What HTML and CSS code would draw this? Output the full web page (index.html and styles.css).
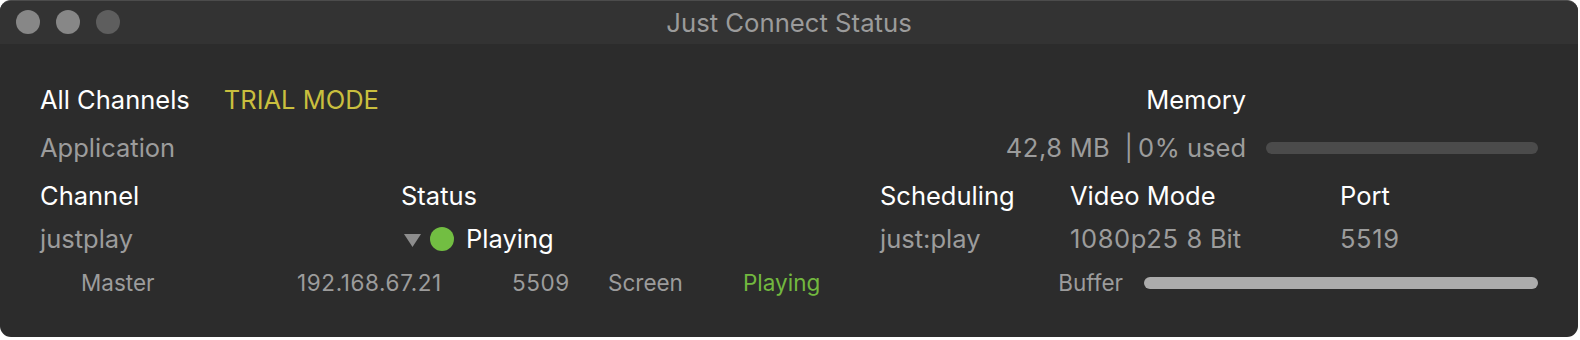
FILE: index.html
```html
<!DOCTYPE html>
<html>
<head>
<meta charset="utf-8">
<link rel="stylesheet" href="styles.css">
</head>
<body>
<div class="window">
  <div class="titlebar">
    <div class="lights">
      <span class="light"></span>
      <span class="light"></span>
      <span class="light dim"></span>
    </div>
    <div class="title">Just Connect Status</div>
  </div>
  <div class="content">
    <div class="summary">
      <div class="row1-left"><span class="white">All Channels</span><span class="trial">TRIAL MODE</span></div>
      <div class="right white">Memory</div>
      <div></div>
      <div class="grey">Application</div>
      <div class="right grey"><span class="num">42,8</span> MB<span class="pipe">|</span><span class="num">0</span>% used</div>
      <div class="barcell"><div class="bar mem"></div></div>
    </div>
    <div class="channels">
      <div class="white">Channel</div>
      <div class="white">Status</div>
      <div class="white">Scheduling</div>
      <div class="white">Video Mode</div>
      <div class="white">Port</div>
      <div class="grey">justplay</div>
      <div class="status">
        <svg class="tri" width="17" height="14" viewBox="0 0 17 14"><polygon points="0,1 17,1 8.5,14" fill="#8d8d8d"/></svg>
        <span class="dot"></span>
        <span class="white">Playing</span>
      </div>
      <div class="grey">just:play</div>
      <div class="grey"><span class="num">1080</span>p<span class="num">25 8</span> Bit</div>
      <div class="grey num">5519</div>
    </div>
    <div class="sub">
      <div>Master</div>
      <div class="num">192.168.67.21</div>
      <div class="num">5509</div>
      <div>Screen</div>
      <div class="green">Playing</div>
      <div class="buflabel">Buffer</div>
      <div class="barcell"><div class="bar buf"></div></div>
    </div>
  </div>
</div>
</body>
</html>
```

FILE: styles.css
```css
html, body {
  margin: 0;
  padding: 0;
  background: #ffffff;
}
body {
  font-family: Inter, "Liberation Sans", sans-serif;
  -webkit-font-smoothing: antialiased;
}
.window {
  width: 1578px;
  height: 337px;
  background: #2c2c2c;
  border-radius: 11px;
  overflow: hidden;
  box-sizing: border-box;
  border-top: 1px solid #4c4c4c;
}
.titlebar {
  height: 43px;
  background: #333333;
  display: flex;
  align-items: center;
  position: relative;
}
.lights {
  display: flex;
  gap: 16px;
  padding-left: 16px;
  margin-top: -1px;
}
.light {
  width: 24px;
  height: 24px;
  border-radius: 50%;
  background: #878787;
}
.light.dim {
  background: #5e5e5e;
}
.title {
  position: absolute;
  left: 0;
  right: 0;
  top: 0;
  height: 43px;
  line-height: 43px;
  text-align: center;
  color: #9b9b9b;
  font-size: 25.7px;
  letter-spacing: 0;
}
.content {
  padding: 40px 40px 0 40px;
  font-size: 25.5px;
  letter-spacing: 0;
}
.num { letter-spacing: 0.6px; }
.pipe { margin: 0 5px 0 15px; }
.white { color: #ffffff; }
.grey { color: #9c9c9c; }
.trial { color: #c9bf3e; margin-left: 34px; }
.green { color: #72b83f; }
.summary {
  display: grid;
  grid-template-columns: 1fr auto 272px;
  column-gap: 20px;
  grid-auto-rows: 48px;
  line-height: 32px;
  align-items: start;
}
.right { text-align: right; }
.barcell {
  display: flex;
  align-items: center;
  height: 32px;
}
.sub .barcell { height: 28px; }
.bar {
  width: 100%;
  height: 12px;
  border-radius: 6px;
}
.bar.mem { background: #4b4b4b; }
.bar.buf { background: #acacac; }
.channels {
  display: grid;
  grid-template-columns: 361px 479px 190px 270px 1fr;
  grid-template-rows: 43px 44px;
  line-height: 32px;
  align-items: start;
}
.status {
  display: flex;
  align-items: center;
  height: 32px;
}
.tri {
  margin-left: 3px;
  margin-right: 9px;
  margin-top: 1px;
}
.dot {
  width: 24px;
  height: 24px;
  border-radius: 50%;
  background: #72be42;
  margin-right: 12px;
}
.sub {
  display: grid;
  grid-template-columns: 216px 215px 96px 135px 1fr auto 394px;
  padding-left: 41px;
  padding-top: 2px;
  font-size: 22.5px;
  letter-spacing: 0;
  line-height: 28px;
  color: #9c9c9c;
  align-items: start;
}
.buflabel {
  margin-right: 21px;
}
```
